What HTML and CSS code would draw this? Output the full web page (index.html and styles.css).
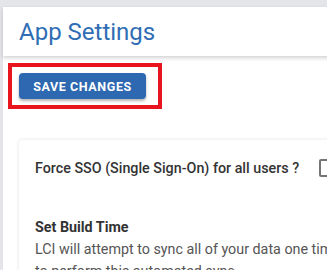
FILE: index.html
```html
<!DOCTYPE html>
<html lang="en">
<head>
    <meta charset="UTF-8">
    <meta name="viewport" content="width=device-width, initial-scale=1.0">
    <title>App Settings</title>
    <link rel="stylesheet" href="styles.css">
</head>
<body>
    <div class="page">
        <header class="page-header">
            <h1>App Settings</h1>
        </header>

        <main class="content">
            <div class="highlight">
                <button type="button" class="save-btn">Save Changes</button>
            </div>

            <section class="settings-card">
                <div class="setting-row">
                    <label for="forceSso">Force SSO (Single Sign-On) for all users ?</label>
                    <span class="checkbox" id="forceSso"></span>
                </div>

                <div class="setting-block">
                    <h4>Set Build Time</h4>
                    <p>LCI will attempt to sync all of your data one time each day. Choose the hour you would like LCI<br>to perform this automated sync.</p>
                </div>
            </section>
        </main>
    </div>
</body>
</html>
```

FILE: styles.css
```css
body {
    margin: 0;
    font-family: Roboto, "Liberation Sans", Arial, sans-serif;
    background-color: #e3e5e8;
    overflow: hidden;
}
.page {
    padding: 7px 0 0 3px;
    width: 760px;
}
.page-header {
    position: relative;
    z-index: 1;
    background: white;
    height: 49px;
    display: flex;
    align-items: center;
    padding-left: 16px;
    box-shadow: 0 2px 4px rgba(0,0,0,0.18);
}
h1 {
    margin: 0;
    font-size: 24px;
    font-weight: 400;
    color: #2f6db5;
}
.content {
    background: white;
    padding: 7px 0 40px 5px;
    min-height: 260px;
}
.highlight {
    width: 139px;
    border: 4px solid #e8141e;
    padding: 6px 0 6px 7px;
}
.save-btn {
    background-color: #2d68b0;
    color: white;
    border: none;
    border-radius: 4px;
    width: 127px;
    height: 26px;
    font-family: inherit;
    font-size: 12.5px;
    font-weight: 700;
    letter-spacing: 0.6px;
    text-transform: uppercase;
    box-shadow: 0 2px 3px rgba(0,0,0,0.3);
    cursor: pointer;
}
.settings-card {
    margin: 31px 0 0 11px;
    padding: 18px 16px 0;
    border-radius: 4px;
    box-shadow: 0 0 4px rgba(0,0,0,0.12);
}
.setting-row {
    display: flex;
    align-items: center;
    gap: 20px;
    height: 20px;
}
.setting-row label {
    font-size: 14.3px;
    font-weight: 500;
    color: #333;
    white-space: nowrap;
}
.checkbox {
    flex: none;
    width: 14px;
    height: 14px;
    border: 2px solid #757575;
    border-radius: 2px;
}
.setting-block {
    margin-top: 38px;
}
.setting-block h4 {
    margin: 0;
    font-size: 14.3px;
    font-weight: 700;
    color: #333;
    line-height: 22px;
}
.setting-block p {
    margin: 0;
    font-size: 14.3px;
    color: #555;
    line-height: 22px;
    white-space: nowrap;
}
```
